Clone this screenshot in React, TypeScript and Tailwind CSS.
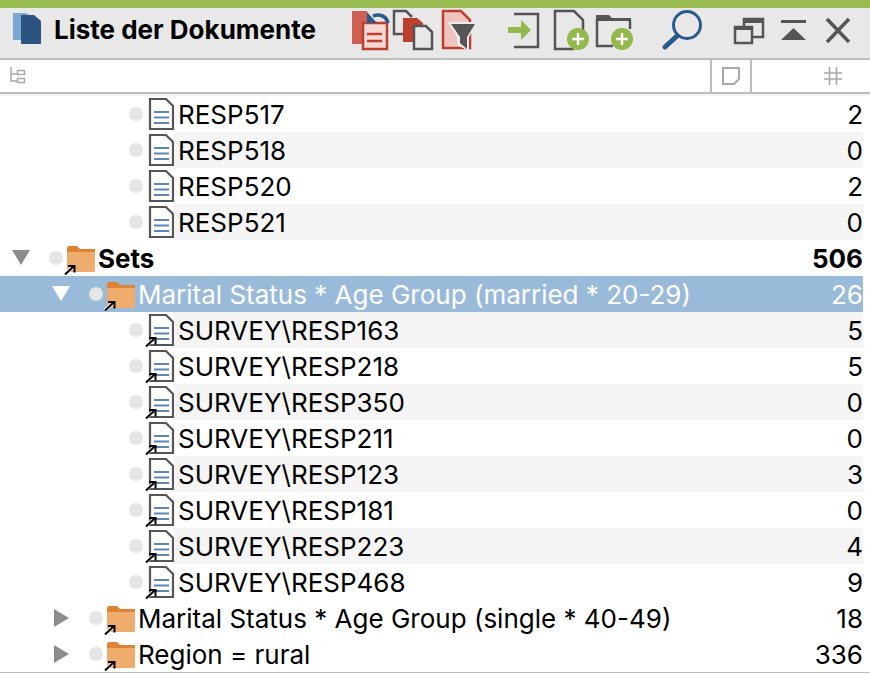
import React from "react";

const GRAY = "#555555";
const RED = "#bf3f2f";
const GREEN = "#93b94b";
const BLUE = "#2a5a8c";

function Svg({ w = 40, h = 40, children }: { w?: number; h?: number; children: React.ReactNode }) {
  return (
    <svg width={w} height={h} viewBox={`0 0 ${w} ${h}`} className="shrink-0 overflow-visible">
      {children}
    </svg>
  );
}

function AppIcon() {
  return (
    <Svg w={32} h={34}>
      <path d="M1 3h13l3 2v25H1z" fill="#7ba6d2" />
      <path d="M9 5h13l7 6v22a1 1 0 0 1-1 1H10a1 1 0 0 1-1-1z" fill="#2b537f" />
    </Svg>
  );
}

function UndoList() {
  return (
    <Svg>
      <rect x="2" y="1" width="15" height="33" fill="#cd6051" />
      <path d="M13 13h24v26H13z" fill="#f6d9d4" stroke={RED} strokeWidth="2.5" />
      <path d="M17 24h15M17 31h15" stroke={RED} strokeWidth="2.5" />
      <path d="M17 2v11h10z" fill={BLUE} />
      <path d="M23 6c6-2 13-1 15 7" fill="none" stroke={BLUE} strokeWidth="3.5" />
    </Svg>
  );
}

function CopyIcon() {
  return (
    <Svg>
      <path d="M9 24H0V1h12l6 6" fill="none" stroke={GRAY} strokeWidth="2.5" />
      <path d="M9 8h14l6 5v19H9z" fill={RED} />
      <path d="M20 16h12l6 6v17H20z" fill="#e8e8e8" stroke={GRAY} strokeWidth="2.5" />
    </Svg>
  );
}

function FilterDoc() {
  return (
    <Svg>
      <path d="M5 1h18l9 9v28H5z" fill="#f0c4be" stroke={RED} strokeWidth="2.5" />
      <path d="M10 12h30l-9 15v14l-12-6v-8z" fill="#ececec" />
      <path d="M13 14h24l-8 13v12l-7-6v-6z" fill={GRAY} />
    </Svg>
  );
}

function ImportIcon() {
  return (
    <Svg>
      <path d="M4 4h24v33H4" fill="none" stroke={GRAY} strokeWidth="2.5" />
      <path d="M-2 17h13v-7l10 10-10 10v-7H-2z" fill={GREEN} />
    </Svg>
  );
}

function Plus({ cx, cy }: { cx: number; cy: number }) {
  return (
    <>
      <circle cx={cx} cy={cy} r="11" fill={GREEN} />
      <path d={`M${cx - 6} ${cy}h12M${cx} ${cy - 6}v12`} stroke="#fff" strokeWidth="2.5" />
    </>
  );
}

function NewDoc() {
  return (
    <Svg>
      <path d="M20 39H1V1h19l9 9v16" fill="none" stroke={GRAY} strokeWidth="2.5" />
      <Plus cx={24} cy={29} />
    </Svg>
  );
}

function NewFolder() {
  return (
    <Svg>
      <path d="M-2 5h13l3 3h19v3H-2z" fill={GRAY} />
      <path d="M-1 9v27h16" fill="none" stroke={GRAY} strokeWidth="2.5" />
      <path d="M32 10v9" fill="none" stroke={GRAY} strokeWidth="2.5" />
      <Plus cx={24} cy={29} />
    </Svg>
  );
}

function SearchIcon() {
  return (
    <Svg>
      <circle cx="25" cy="15" r="13.5" fill="none" stroke={BLUE} strokeWidth="3" />
      <path d="M15 26L3 37" stroke={BLUE} strokeWidth="5" strokeLinecap="round" />
    </Svg>
  );
}

function WindowsIcon() {
  return (
    <Svg>
      <path d="M14 16V9h19v18H23" fill="none" stroke={GRAY} strokeWidth="2.5" />
      <path d="M13 8h21v5H13z" fill={GRAY} />
      <path d="M5 17h17v16H5z" fill="none" stroke={GRAY} strokeWidth="2.5" />
      <path d="M4 16h19v4H4z" fill={GRAY} />
    </Svg>
  );
}

function CollapseIcon() {
  return (
    <Svg>
      <rect x="7" y="10" width="25" height="3" fill={GRAY} />
      <path d="M7 30l12.5-12L32 30z" fill={GRAY} />
    </Svg>
  );
}

function CloseIcon() {
  return (
    <Svg>
      <path d="M9 9l22 23M31 9L9 32" stroke={GRAY} strokeWidth="3.5" />
    </Svg>
  );
}

function TreeIcon() {
  return (
    <Svg w={16} h={18}>
      <path d="M1 0v14h6M1 7h6" fill="none" stroke="#a8a8a8" strokeWidth="1.5" />
      <rect x="7.5" y="3.5" width="7" height="4" fill="none" stroke="#a8a8a8" strokeWidth="1.5" />
      <rect x="7.5" y="11.5" width="7" height="4" fill="none" stroke="#a8a8a8" strokeWidth="1.5" />
    </Svg>
  );
}

function NoteIcon() {
  return (
    <Svg w={18} h={18}>
      <path d="M1 1h16v11l-5 5H1z" fill="none" stroke="#a8a8a8" strokeWidth="2" />
    </Svg>
  );
}

function HashIcon() {
  return (
    <Svg w={18} h={18}>
      <path d="M5.5 0v18M12.5 0v18M0 6h18M0 12h18" stroke="#a8a8a8" strokeWidth="1.5" />
    </Svg>
  );
}

function Alias({ x, y }: { x: number; y: number }) {
  return (
    <g transform={`translate(${x} ${y})`}>
      <path d="M0 9L8 2" stroke="#fff" strokeWidth="3.5" />
      <path d="M0 9.5L8 2M3 1h6.5v6.5" fill="none" stroke="#000" strokeWidth="2" />
    </g>
  );
}

function FolderIcon() {
  return (
    <Svg w={32} h={32}>
      <path d="M3 6a2 2 0 0 1 2-2h8l3 3h15v4H3z" fill="#df8233" />
      <path d="M3 10h28v19a1 1 0 0 1-1 1H4a1 1 0 0 1-1-1z" fill="#eead6d" />
      <Alias x={1} y={23} />
    </Svg>
  );
}

function DocIcon({ alias }: { alias?: boolean }) {
  return (
    <Svg w={32} h={34}>
      <path d="M6 2h16l7 7v23H6z" fill="#fff" stroke={GRAY} strokeWidth="2.2" />
      <path d="M10 15h15M10 20.5h15M10 26h15" stroke="#5b87b8" strokeWidth="2" />
      {alias && <Alias x={2} y={24} />}
    </Svg>
  );
}

function Triangle({ open, selected }: { open?: boolean; selected?: boolean }) {
  const fill = selected ? "#ffffff" : "#8c8c8c";
  return (
    <Svg w={18} h={18}>
      {open ? <path d="M0 1h18L9 16z" fill={fill} /> : <path d="M2 0l15 9-15 9z" fill={fill} />}
    </Svg>
  );
}

type RowData = {
  depth: 0 | 1 | 2;
  label: string;
  count: number;
  kind: "doc" | "alias" | "folder";
  open?: boolean;
  bold?: boolean;
  selected?: boolean;
  zebra?: boolean;
};

const rows: RowData[] = [
  { depth: 2, label: "RESP517", count: 2, kind: "doc" },
  { depth: 2, label: "RESP518", count: 0, kind: "doc", zebra: true },
  { depth: 2, label: "RESP520", count: 2, kind: "doc" },
  { depth: 2, label: "RESP521", count: 0, kind: "doc", zebra: true },
  { depth: 0, label: "Sets", count: 506, kind: "folder", open: true, bold: true },
  { depth: 1, label: "Marital Status * Age Group (married * 20-29)", count: 26, kind: "folder", open: true, selected: true },
  { depth: 2, label: "SURVEY\\RESP163", count: 5, kind: "alias", zebra: true },
  { depth: 2, label: "SURVEY\\RESP218", count: 5, kind: "alias" },
  { depth: 2, label: "SURVEY\\RESP350", count: 0, kind: "alias", zebra: true },
  { depth: 2, label: "SURVEY\\RESP211", count: 0, kind: "alias" },
  { depth: 2, label: "SURVEY\\RESP123", count: 3, kind: "alias", zebra: true },
  { depth: 2, label: "SURVEY\\RESP181", count: 0, kind: "alias" },
  { depth: 2, label: "SURVEY\\RESP223", count: 4, kind: "alias", zebra: true },
  { depth: 2, label: "SURVEY\\RESP468", count: 9, kind: "alias" },
  { depth: 1, label: "Marital Status * Age Group (single * 40-49)", count: 18, kind: "folder" },
  { depth: 1, label: "Region = rural", count: 336, kind: "folder" },
];

function Row({ r }: { r: RowData }) {
  const indent = r.depth === 0 ? "pl-3" : r.depth === 1 ? "pl-13" : "pl-23";
  return (
    <div className={`flex h-9 items-center ${r.selected ? "bg-[#9abada] text-white" : "text-black"}`}>
      <div className={`flex items-center ${indent}`}>
        <div className="w-9">{r.kind === "folder" && <Triangle open={r.open} selected={r.selected} />}</div>
        <div className="flex w-4 justify-center">
          <div className="size-3.5 rounded-full bg-neutral-200" />
        </div>
        {r.kind === "folder" ? <FolderIcon /> : <DocIcon alias={r.kind === "alias"} />}
      </div>
      <div
        className={`-ml-0.5 flex h-9 flex-1 items-center justify-between pl-1 ${r.zebra ? "bg-neutral-100" : ""} ${
          r.bold ? "font-bold" : ""
        }`}
      >
        <span>{r.label}</span>
        <span>{r.count}</span>
      </div>
    </div>
  );
}

export default function App() {
  return (
    <div className="flex h-[673px] w-[870px] flex-col overflow-hidden bg-white font-['Inter',sans-serif] text-[26px]">
      <div className="h-2 bg-[#98bc50]" />
      <div className="flex h-[52px] items-center border-b-2 border-[#bdbdbd] bg-[#e8e8e8] pl-3 pr-3">
        <div className="mt-0.5 self-start">
          <AppIcon />
        </div>
        <span className="mb-2 ml-2.5 font-bold text-black">Liste der Dokumente</span>
        <div className="ml-auto mt-0.5 flex self-start">
          <div className="mr-8 flex gap-1">
            <UndoList />
            <CopyIcon />
            <FilterDoc />
          </div>
          <div className="mr-6 flex gap-1">
            <ImportIcon />
            <NewDoc />
            <NewFolder />
          </div>
          <div className="mr-7">
            <SearchIcon />
          </div>
          <div className="flex gap-1">
            <WindowsIcon />
            <CollapseIcon />
            <CloseIcon />
          </div>
        </div>
      </div>
      <div className="flex h-[34px] items-stretch border-b-2 border-[#bdbdbd]">
        <div className="flex flex-1 items-center pl-2.5">
          <TreeIcon />
        </div>
        <div className="flex w-10 items-center justify-center border-l-2 border-[#bdbdbd]">
          <NoteIcon />
        </div>
        <div className="flex w-[120px] items-center justify-end border-l-2 border-[#bdbdbd] pr-7">
          <HashIcon />
        </div>
      </div>
      <div className="h-0.5 bg-neutral-100" />
      <div className="pr-[7px]">
        {rows.map((r) => (
          <Row key={r.label} r={r} />
        ))}
      </div>
      <div className="h-px bg-[#bdbdbd]" />
    </div>
  );
}
